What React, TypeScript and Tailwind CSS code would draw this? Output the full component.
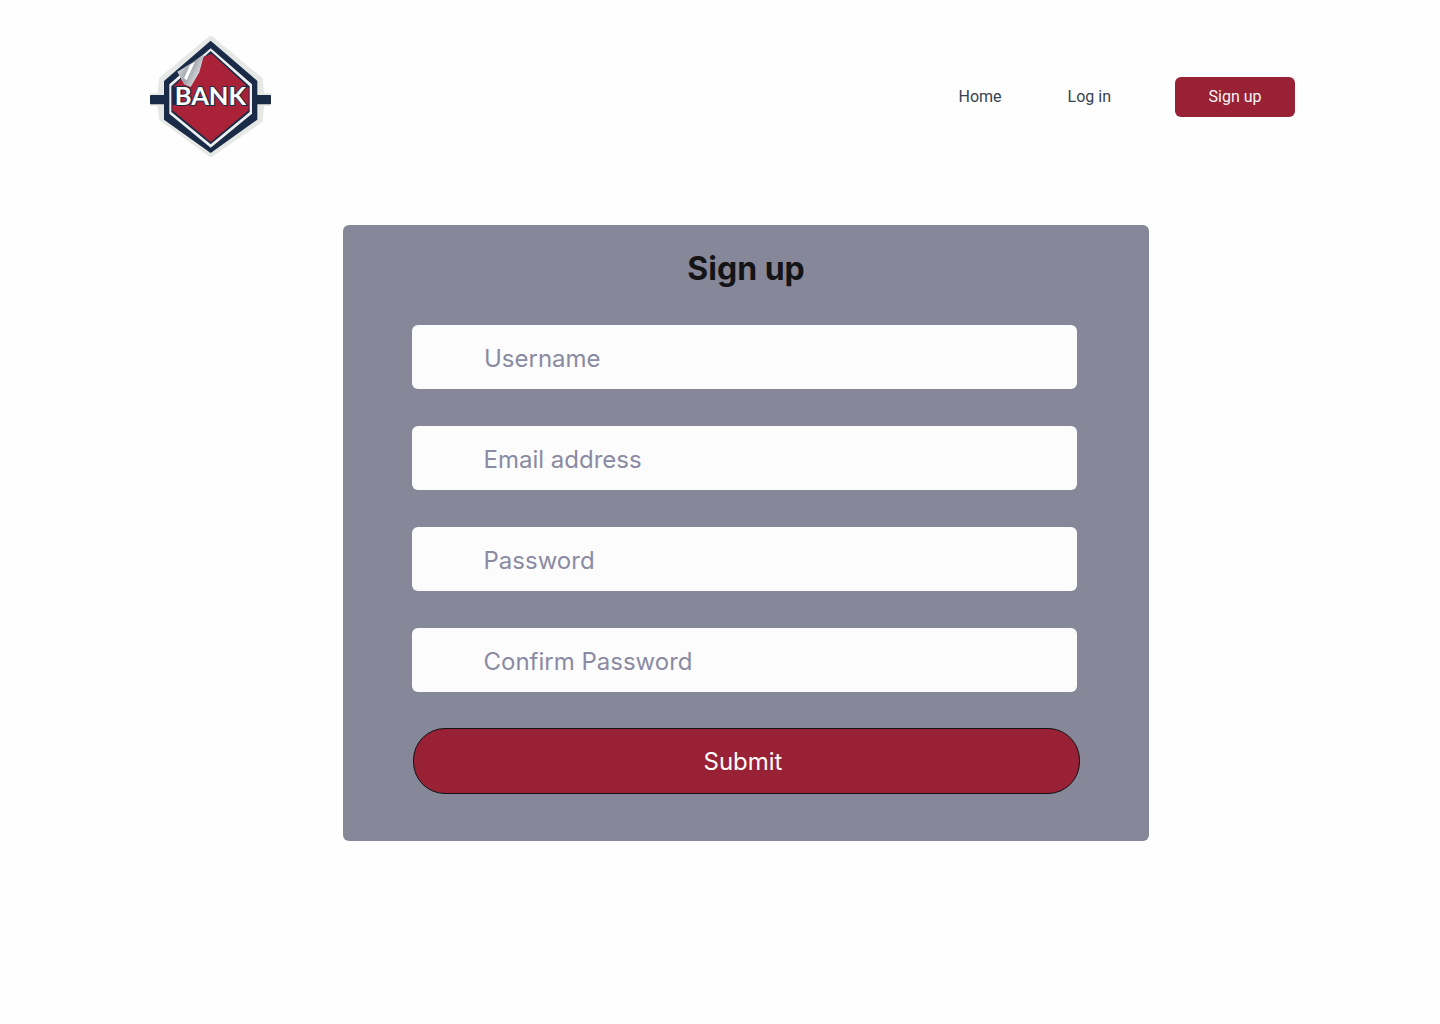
import React from 'react';

const fields = [
  { placeholder: 'Username', className: 'ml-[69px]' },
  { placeholder: 'Email address', className: 'ml-[68.5px]' },
  { placeholder: 'Password', className: 'ml-[68.5px]' },
  { placeholder: 'Confirm Password', className: 'ml-[68.5px]' },
];

const Logo: React.FC = () => (
  <svg viewBox="30 33 363 363" className="w-[121px] h-[121px] shrink-0">
    <defs>
      <linearGradient id="paper" x1="0" y1="0" x2="1" y2="0.6">
        <stop offset="0" stopColor="#f4f5f5" />
        <stop offset="0.55" stopColor="#9fa4ab" />
        <stop offset="1" stopColor="#eceded" />
      </linearGradient>
    </defs>
    <polygon points="212,30 368,160 372,205 393,205 393,242 372,242 368,290 212,398 58,285 52,242 30,242 30,205 52,205 58,158" fill="#e6e8e5" />
    <rect x="30" y="210" width="363" height="28" rx="3" fill="#1a2b47" />
    <polygon points="212,47 352,168 352,284 212,384 72,284 72,168" fill="#1a2b47" />
    <polygon points="212,70 336,178 336,266 212,368 88,266 88,178" fill="#eef0f1" />
    <polygon points="212,78 329,184 329,261 212,358 94,261 94,184" fill="#1a2b47" />
    <polygon points="215,86 326,188 326,256 212,351 97,256 97,205 100,185 190,96" fill="#a92238" />
    <polygon points="112,140 158,112 193,86 178,142 152,186 132,178" fill="url(#paper)" />
    <polygon points="150,120 165,110 140,165 132,160" fill="#ffffff" />
    <polygon points="97,186 160,186 130,190 108,240 97,240" fill="#1a2b47" />
    <text
      x="211"
      y="240"
      textAnchor="middle"
      fill="#ffffff"
      stroke="#1a2b47"
      strokeWidth="6"
      paintOrder="stroke"
      fontSize="76"
      fontWeight="700"
      fontFamily="'Lato', sans-serif"
      textLength="214"
      lengthAdjust="spacingAndGlyphs"
    >
      BANK
    </text>
  </svg>
);

export default function App() {
  return (
    <div className="min-h-[1024px] bg-[#fefefe] font-['Inter',sans-serif]">
      <header className="flex items-center justify-between pl-[150px] pr-[145px] pt-[36px]">
        <Logo />
        <nav className="flex items-center font-['Roboto',sans-serif] text-[#374151] text-base">
          <a className="mr-[66px]">Home</a>
          <a className="mr-[64px]">Log in</a>
          <button className="w-[120px] h-[40px] rounded-md bg-[#982136] text-[#f5f5f7] text-base">Sign up</button>
        </nav>
      </header>

      <main className="ml-[343px] mt-[68px] w-[806px] h-[616px] rounded-md bg-[#868899] pt-[24px]">
        <h1 className="text-center text-[32px] leading-[40px] font-bold text-[#141416]">Sign up</h1>
        <div className="mt-[36px] flex flex-col gap-[37px]">
          {fields.map((f) => (
            <input
              key={f.placeholder}
              placeholder={f.placeholder}
              className={`block w-[665px] h-[64px] rounded-md bg-[#fcfcfd] pl-[72px] pt-[2px] text-2xl text-[#8a8ba3] placeholder:text-[#8a8ba3] outline-none ${f.className}`}
            />
          ))}
        </div>
        <button className="ml-[70px] mt-[36px] block w-[667px] h-[66px] rounded-[32px] border border-[#111] bg-[#982136] pr-[7px] pt-[1px] text-2xl text-[#fcfcfd]">
          Submit
        </button>
      </main>
    </div>
  );
}
